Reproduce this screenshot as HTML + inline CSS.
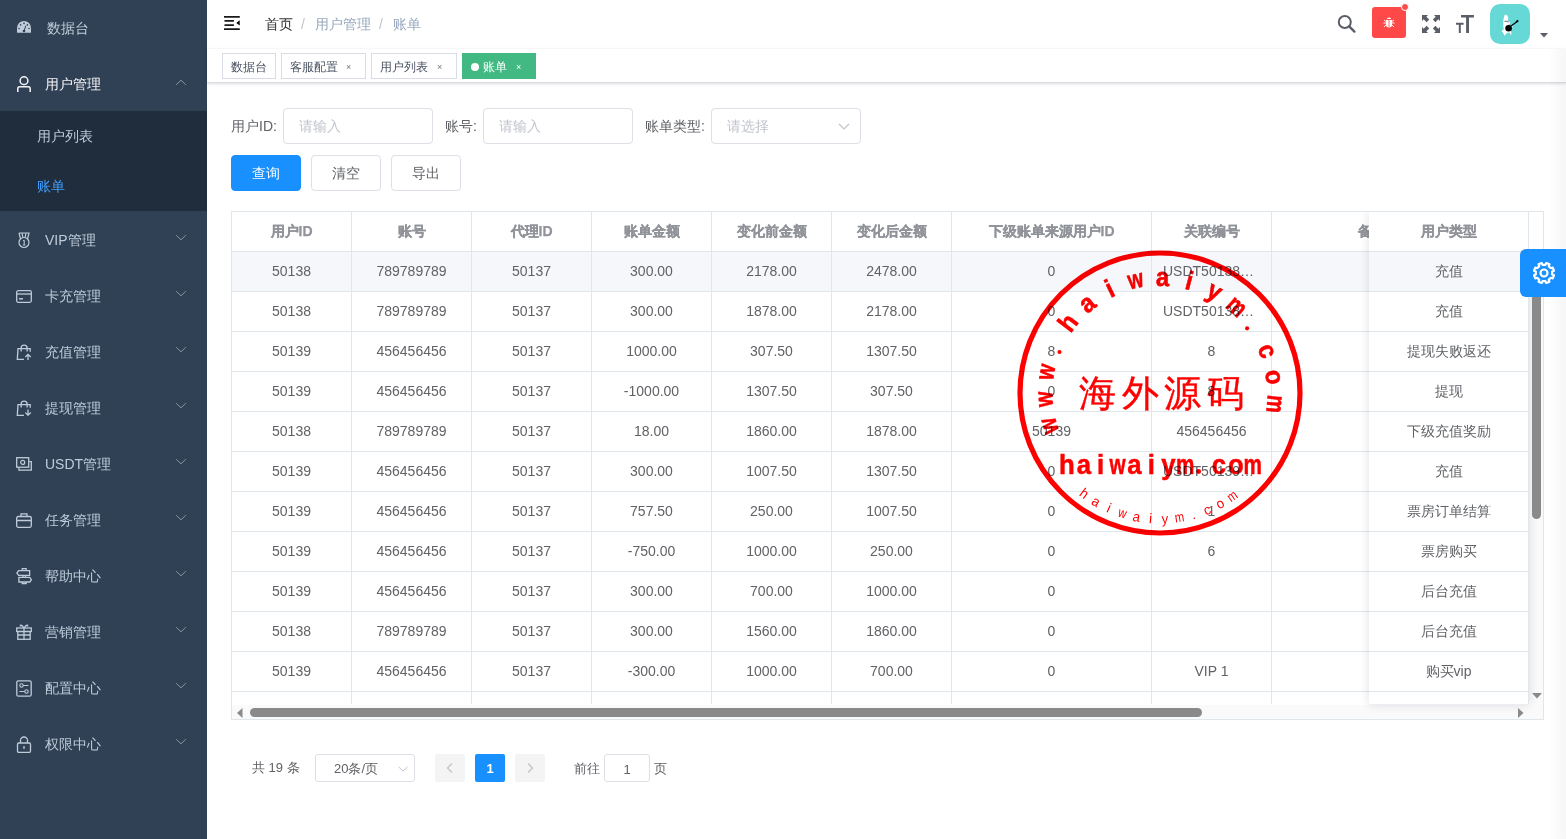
<!DOCTYPE html>
<html><head><meta charset="utf-8">
<style>
*{margin:0;padding:0;box-sizing:border-box}
html,body{width:1566px;height:839px;overflow:hidden;background:#fff;font-family:"Liberation Sans",sans-serif;}
.abs{position:absolute}
#side{position:absolute;left:0;top:0;width:207px;height:839px;background:#304156}
.mi{position:absolute;left:0;width:207px;height:56px;font-size:14px;color:#bfcbd9;line-height:56px;white-space:nowrap}
.mi .t{position:absolute;left:45px;top:1px}
.mi svg.ic{position:absolute;left:15px}
.mi svg.ar{position:absolute;left:175px;top:23px}
#sub{position:absolute;left:0;top:111px;width:207px;height:100px;background:#1f2d3d}
.si{position:absolute;left:37px;font-size:14px;line-height:50px;height:50px;color:#bfcbd9;white-space:nowrap}
#nav{position:absolute;left:207px;top:0;width:1359px;height:49px;background:#fff}
.bc{position:absolute;top:0;line-height:49px;font-size:14px;white-space:nowrap}
#tags{position:absolute;left:207px;top:49px;width:1359px;height:34px;background:#fff;border-bottom:1px solid #d8dce5;box-shadow:0 1px 3px 0 rgba(0,0,0,.12),0 0 3px 0 rgba(0,0,0,.04)}
.tag{position:absolute;top:4px;height:26px;line-height:27px;border:1px solid #d8dce5;color:#495060;font-size:12px;padding-left:8px;white-space:nowrap;background:#fff}
.tag .x{position:absolute;top:0px;font-size:9px;color:#777}
.lbl{position:absolute;font-size:14px;color:#606266;line-height:36px;top:108px;white-space:nowrap}
.inp{position:absolute;top:108px;height:36px;border:1px solid #dcdfe6;border-radius:4px;font-size:14px;color:#c0c4cc;line-height:34px;padding-left:15px;background:#fff;white-space:nowrap}
.btn{position:absolute;top:155px;height:36px;border:1px solid #dcdfe6;border-radius:4px;font-size:14px;color:#606266;line-height:34px;text-align:center;background:#fff;white-space:nowrap}
#tbl{position:absolute;left:231px;top:211px;width:1313px;height:509px;border:1px solid #dfe6ec;overflow:hidden;background:#fff}
#tb-inner{position:absolute;left:0;top:0;width:1297px;height:492px;overflow:hidden}
.th{position:absolute;top:0;height:40px;line-height:39px;text-align:center;font-size:14px;font-weight:bold;color:#909399;-webkit-text-stroke:.25px #909399;border-right:1px solid #dfe6ec;border-bottom:1px solid #dfe6ec;white-space:nowrap;overflow:hidden;background:#fff}
.tr{position:absolute;left:0;height:40px}
.tr.hov .td{background:#f5f7fa}
.td{position:absolute;top:0;height:40px;line-height:39px;text-align:center;font-size:14px;color:#606266;border-right:1px solid #dfe6ec;border-bottom:1px solid #dfe6ec;white-space:nowrap;overflow:hidden;background:#fff;padding:0 10px;text-overflow:ellipsis}
#fixed{position:absolute;left:1137px;top:0;width:160px;height:493px;background:#fff;box-shadow:0 0 10px rgba(0,0,0,.12);border-bottom:1px solid #ebeef5;overflow:hidden}
#fshadow{position:absolute;left:-8px;top:0;width:8px;height:493px;background:linear-gradient(90deg,rgba(0,0,0,0),rgba(0,0,0,.06))}
#vbar{position:absolute;left:1297px;top:40px;width:14px;height:467px;background:#fafafa}
#hbar{position:absolute;left:0;top:493px;width:1297px;height:14px;background:#fafafa}
.pg{position:absolute;top:754px;height:28px;font-size:13px;line-height:30px;white-space:nowrap}
.st1{font-family:"Liberation Sans",sans-serif;font-weight:bold;font-size:26px;fill:#f00;stroke:#f00;stroke-width:.6px;text-anchor:middle;dominant-baseline:central}
.st2{font-family:"Liberation Sans",sans-serif;font-size:14px;fill:#f00;text-anchor:middle;dominant-baseline:central}
.st3{font-family:"Liberation Serif",serif;font-size:37px;fill:#f00;stroke:#f00;stroke-width:.4px;text-anchor:middle;dominant-baseline:central;letter-spacing:5.5px}
.st4{font-family:"Liberation Sans",sans-serif;font-weight:bold;font-size:28px;fill:#f00;stroke:#f00;stroke-width:.5px;text-anchor:middle}
</style></head><body>
<div id="side">
  <div class="mi" style="top:-1px"><svg class="ic" style="top:22px;left:17px" width="14" height="12" viewBox="0 0 14 12"><path d="M0 11.7V7A7 7 0 0 1 14 7v4.7z" fill="#bfcbd9"/><g fill="#304156"><circle cx="2" cy="7.5" r=".8"/><circle cx="3.6" cy="3.9" r=".8"/><circle cx="7" cy="2.4" r=".8"/><circle cx="10.4" cy="3.9" r=".8"/><circle cx="12" cy="7.5" r=".8"/><circle cx="7" cy="10" r="1.3"/></g><path d="M7 10L8.9 4.6" stroke="#304156" stroke-width="1"/></svg><span class="t" style="left:47px">数据台</span></div>
  <div class="mi" style="top:55px;color:#f4f4f5"><svg class="ic" style="top:20px;left:17px" width="15" height="17" viewBox="0 0 15 17"><circle cx="7" cy="5.7" r="3.9" fill="none" stroke="#f4f4f5" stroke-width="1.5"/><path d="M.8 17v-3.3q0-1.9 1.9-1.9h8.6q1.9 0 1.9 1.9V17" fill="none" stroke="#f4f4f5" stroke-width="1.5"/></svg><span class="t">用户管理</span><svg class="ar" style="top:24px" width="12" height="7" viewBox="0 0 12 7"><path d="M1.2 5.8L6 1.2l4.8 4.6" fill="none" stroke="#909399" stroke-width="1"/></svg></div>
  <div id="sub">
    <div class="si" style="top:0">用户列表</div>
    <div class="si" style="top:50px;color:#409eff">账单</div>
  </div>
  <div class="mi" style="top:211px"><svg class="ic" style="top:21px;left:17px" width="14" height="17" viewBox="0 0 14 17"><path d="M2 1h10l-1.5 6M2 1l1.5 6M5 1l1 5M9 1l-1 5" fill="none" stroke="#bfcbd9" stroke-width="1.2"/><circle cx="7" cy="10.5" r="5" fill="none" stroke="#bfcbd9" stroke-width="1.2"/><path d="M6 9l1.2-1v5M5.8 13h2.6" fill="none" stroke="#bfcbd9" stroke-width="1"/></svg><span class="t">VIP管理</span><svg class="ar" width="12" height="7" viewBox="0 0 12 7"><path d="M1.2 1.2L6 5.8l4.8-4.6" fill="none" stroke="#909399" stroke-width="1"/></svg></div>
  <div class="mi" style="top:267px"><svg class="ic" style="top:23px;left:16px" width="16" height="13" viewBox="0 0 16 13"><rect x=".7" y=".7" width="14.6" height="11.6" rx="1.5" fill="none" stroke="#bfcbd9" stroke-width="1.3"/><path d="M.7 4h14.6" stroke="#bfcbd9" stroke-width="1.3"/><path d="M3 8.8h4" stroke="#bfcbd9" stroke-width="1.5"/></svg><span class="t">卡充管理</span><svg class="ar" width="12" height="7" viewBox="0 0 12 7"><path d="M1.2 1.2L6 5.8l4.8-4.6" fill="none" stroke="#909399" stroke-width="1"/></svg></div>
  <div class="mi" style="top:323px"><svg class="ic" style="top:21px;left:16px" width="16" height="16" viewBox="0 0 16 16"><path d="M8 15.3H1.3L2 4.7h12.2v3" fill="none" stroke="#bfcbd9" stroke-width="1.3"/><path d="M5.1 7.4V4.2a3 3 0 0 1 6 0v3.2" fill="none" stroke="#bfcbd9" stroke-width="1.3"/><path d="M12 16V10.6M9.4 13l2.6-2.6 2.8 2.6" fill="none" stroke="#bfcbd9" stroke-width="1.3"/></svg><span class="t">充值管理</span><svg class="ar" width="12" height="7" viewBox="0 0 12 7"><path d="M1.2 1.2L6 5.8l4.8-4.6" fill="none" stroke="#909399" stroke-width="1"/></svg></div>
  <div class="mi" style="top:379px"><svg class="ic" style="top:21px;left:16px" width="16" height="16" viewBox="0 0 16 16"><path d="M8 15.3H1.3L2 4.7h12.2v3" fill="none" stroke="#bfcbd9" stroke-width="1.3"/><path d="M5.1 7.4V4.2a3 3 0 0 1 6 0v3.2" fill="none" stroke="#bfcbd9" stroke-width="1.3"/><path d="M12 9.6V15M9.4 12.6l2.6 2.6 2.8-2.6" fill="none" stroke="#bfcbd9" stroke-width="1.3"/></svg><span class="t">提现管理</span><svg class="ar" width="12" height="7" viewBox="0 0 12 7"><path d="M1.2 1.2L6 5.8l4.8-4.6" fill="none" stroke="#909399" stroke-width="1"/></svg></div>
  <div class="mi" style="top:435px"><svg class="ic" style="top:22px;left:16px" width="16" height="15" viewBox="0 0 16 15"><rect x=".7" y=".7" width="12" height="9.5" fill="none" stroke="#bfcbd9" stroke-width="1.3"/><circle cx="6.7" cy="5.4" r="2" fill="none" stroke="#bfcbd9" stroke-width="1.2"/><path d="M2.9 10.5v2.6h12.4V4.6h-2" fill="none" stroke="#bfcbd9" stroke-width="1.3"/></svg><span class="t">USDT管理</span><svg class="ar" width="12" height="7" viewBox="0 0 12 7"><path d="M1.2 1.2L6 5.8l4.8-4.6" fill="none" stroke="#909399" stroke-width="1"/></svg></div>
  <div class="mi" style="top:491px"><svg class="ic" style="top:22px;left:16px" width="16" height="15" viewBox="0 0 16 15"><rect x=".7" y="3.5" width="14.6" height="10.8" rx="1.5" fill="none" stroke="#bfcbd9" stroke-width="1.3"/><path d="M5 3.5V.8h6v2.7M.7 7.5h14.6" fill="none" stroke="#bfcbd9" stroke-width="1.3"/></svg><span class="t">任务管理</span><svg class="ar" width="12" height="7" viewBox="0 0 12 7"><path d="M1.2 1.2L6 5.8l4.8-4.6" fill="none" stroke="#909399" stroke-width="1"/></svg></div>
  <div class="mi" style="top:547px"><svg class="ic" style="top:20px;left:16px" width="17" height="18" viewBox="0 0 17 18"><path d="M13.6 3.6H2.6L.9 6l1.7 2.4h11z" fill="none" stroke="#bfcbd9" stroke-width="1.3"/><path d="M2.9 10.4h10.9l1.6 2.3-1.6 2.3H2.9z" fill="none" stroke="#bfcbd9" stroke-width="1.3"/><path d="M6.2 3.6V1.6h4v2M6.2 15v1.7h4V15M7 8.4v2M9.4 8.4v2" fill="none" stroke="#bfcbd9" stroke-width="1.2"/></svg><span class="t">帮助中心</span><svg class="ar" width="12" height="7" viewBox="0 0 12 7"><path d="M1.2 1.2L6 5.8l4.8-4.6" fill="none" stroke="#909399" stroke-width="1"/></svg></div>
  <div class="mi" style="top:603px"><svg class="ic" style="top:20px;left:16px" width="16" height="17" viewBox="0 0 16 17"><rect x=".7" y="5" width="14.6" height="3.5" fill="none" stroke="#bfcbd9" stroke-width="1.3"/><rect x="1.8" y="8.5" width="12.4" height="7.8" fill="none" stroke="#bfcbd9" stroke-width="1.3"/><path d="M8 5v11.3M1.8 12h12.4M8 5C6 2 3.5 1 4.5 3.5M8 5c2-3 4.5-4 3.5-1.5" fill="none" stroke="#bfcbd9" stroke-width="1.3"/></svg><span class="t">营销管理</span><svg class="ar" width="12" height="7" viewBox="0 0 12 7"><path d="M1.2 1.2L6 5.8l4.8-4.6" fill="none" stroke="#909399" stroke-width="1"/></svg></div>
  <div class="mi" style="top:659px"><svg class="ic" style="top:21px;left:16px" width="16" height="17" viewBox="0 0 16 17"><rect x=".8" y=".8" width="14.4" height="15.4" rx="1.5" fill="none" stroke="#bfcbd9" stroke-width="1.3"/><circle cx="5.5" cy="5.5" r="1.7" fill="none" stroke="#bfcbd9" stroke-width="1.1"/><circle cx="10.5" cy="11.5" r="1.7" fill="none" stroke="#bfcbd9" stroke-width="1.1"/><path d="M7.2 5.5H12.5M3.5 11.5h5.3" stroke="#bfcbd9" stroke-width="1.1"/></svg><span class="t">配置中心</span><svg class="ar" width="12" height="7" viewBox="0 0 12 7"><path d="M1.2 1.2L6 5.8l4.8-4.6" fill="none" stroke="#909399" stroke-width="1"/></svg></div>
  <div class="mi" style="top:715px"><svg class="ic" style="top:21px;left:16px" width="16" height="17" viewBox="0 0 16 17"><rect x="1.5" y="7" width="13" height="9.3" rx="1.2" fill="none" stroke="#bfcbd9" stroke-width="1.3"/><path d="M4.5 7V4.5a3.5 3.5 0 0 1 7 0V7M8 10v3" fill="none" stroke="#bfcbd9" stroke-width="1.3"/></svg><span class="t">权限中心</span><svg class="ar" width="12" height="7" viewBox="0 0 12 7"><path d="M1.2 1.2L6 5.8l4.8-4.6" fill="none" stroke="#909399" stroke-width="1"/></svg></div>
</div>

<div id="nav">
  <svg class="abs" style="left:17px;top:16px" width="16" height="15" viewBox="0 0 16 15"><path d="M0 .85h15.8M.5 4.85h9.4M.5 9.1h9.4M0 13.1h15.8" stroke="#1a1a1a" stroke-width="1.7"/><path d="M15.7 4.3v5.2l-3.4-2.6z" fill="#000"/></svg>
  <div class="bc" style="left:58px;color:#303133">首页</div>
  <div class="bc" style="left:94px;color:#c0c4cc">/</div>
  <div class="bc" style="left:108px;color:#97a8be">用户管理</div>
  <div class="bc" style="left:172px;color:#c0c4cc">/</div>
  <div class="bc" style="left:186px;color:#97a8be">账单</div>
  <!-- right icons -->
  <svg class="abs" style="left:1130px;top:14px" width="20" height="20" viewBox="0 0 20 20"><circle cx="7.8" cy="8" r="6" fill="none" stroke="#5a5e66" stroke-width="2"/><path d="M12.2 12.4l5.2 5.2" stroke="#5a5e66" stroke-width="2.4" stroke-linecap="round"/></svg>
  <div class="abs" style="left:1165px;top:7px;width:34px;height:31px;background:#ff4949;border-radius:3px"></div>
  <div class="abs" style="left:1194px;top:3px;width:8px;height:8px;background:#ff4949;border:1px solid #fff;border-radius:50%"></div>
  <svg class="abs" style="left:1176px;top:16px" width="12" height="12" viewBox="0 0 12 12"><path d="M3.8 3a2.2 1.6 0 0 1 4.4 0z" fill="#fff"/><path d="M3 4h6v4.5a3 3 0 0 1-6 0z" fill="#fff"/><path d="M6 4v7" stroke="#ff4949" stroke-width=".8"/><path d="M3 5.5L1 4M9 5.5L11 4M3 7H.5M9 7h2.5M3 9l-2 2M9 9l2 2" stroke="#fff" stroke-width=".9"/></svg>
  <svg class="abs" style="left:1215px;top:15px" width="18" height="18" viewBox="0 0 18 18"><g fill="#5a5e66"><path d="M0 0h6L4.3 1.7 7.2 4.6 4.6 7.2 1.7 4.3 0 6z"/><path d="M18 0v6l-1.7-1.7-2.9 2.9-2.6-2.6 2.9-2.9L12 0z"/><path d="M0 18v-6l1.7 1.7 2.9-2.9 2.6 2.6-2.9 2.9L6 18z"/><path d="M18 18h-6l1.7-1.7-2.9-2.9 2.6-2.6 2.9 2.9L18 12z"/></g></svg>
  <svg class="abs" style="left:1249px;top:15px" width="19" height="18" viewBox="0 0 19 18"><g fill="#5a5e66"><path d="M5 0h12.9v2.4h-4.9V18h-2.9V2.4H5z"/><path d="M0 7.8h7.6v2H4.8V18H2.8V9.8H0z"/></g></svg>
  <div class="abs" style="left:1283px;top:4px;width:40px;height:40px;background:#66d8d6;border-radius:10px;overflow:hidden">
    <svg width="40" height="40" viewBox="0 0 40 40"><g transform="translate(1.2 0)"><path d="M13.5 10.5l1.2 1 1-.9.6 1.6.9 1.2-.5 1.6.4 1.7-.2 1.2 2.3.4-.4 1.4-1.5.6 1.2 2.6 2.5-1.5.7 1.2-1.8 1.6-.6 1.9.8 2.5.1 1.9-.9.1-1.1-2.3-2.1.7-1.6 1.3-.8 1.1-1.1-.2.4-1.4-1.4-.3.2-1.2-1.3-.5.3-1.3 1.5-.5.1-1.9-.4-2.5.2-2.7-.1-2.8z" fill="#fff"/><circle cx="17.4" cy="24.2" r="3.3" fill="#000"/><path d="M19.5 22.3l6.5-4.8" stroke="#000" stroke-width="1.1"/><path d="M25 18l2-1.6" stroke="#000" stroke-width="1.8"/><path d="M13.3 17.3h3.7" stroke="#555" stroke-width=".9"/><circle cx="17" cy="18.3" r=".7" fill="#f9c"/></g></svg>
  </div>
  <svg class="abs" style="left:1333px;top:33px" width="8" height="5" viewBox="0 0 8 5"><path d="M0 0h8L4 4.5z" fill="#5a5e66"/></svg>
</div>

<div id="tags">
  <div class="tag" style="left:15px;width:54px">数据台</div>
  <div class="tag" style="left:74px;width:85px">客服配置<span class="x" style="left:64px">×</span></div>
  <div class="tag" style="left:164px;width:86px">用户列表<span class="x" style="left:65px">×</span></div>
  <div class="tag" style="left:255px;width:74px;background:#42b983;border-color:#42b983;color:#fff"><span style="display:inline-block;width:8px;height:8px;border-radius:50%;background:#fff;margin-right:4px;vertical-align:0px"></span>账单<span class="x" style="left:53px;color:#fff">×</span></div>
</div>

<div class="lbl" style="left:231px">用户ID:</div>
<div class="inp" style="left:283px;width:150px">请输入</div>
<div class="lbl" style="left:445px">账号:</div>
<div class="inp" style="left:483px;width:150px">请输入</div>
<div class="lbl" style="left:645px">账单类型:</div>
<div class="inp" style="left:711px;width:150px">请选择<svg class="abs" style="left:126px;top:14px" width="12" height="7" viewBox="0 0 12 7"><path d="M1 1l5 5 5-5" fill="none" stroke="#c0c4cc" stroke-width="1.2"/></svg></div>

<div class="btn" style="left:231px;width:70px;background:#1890ff;border-color:#1890ff;color:#fff">查询</div>
<div class="btn" style="left:311px;width:70px">清空</div>
<div class="btn" style="left:391px;width:70px">导出</div>

<div id="tbl">
  <div id="tb-inner">
<div class="th" style="left:0px;width:120px">用户ID</div>
<div class="th" style="left:120px;width:120px">账号</div>
<div class="th" style="left:240px;width:120px">代理ID</div>
<div class="th" style="left:360px;width:120px">账单金额</div>
<div class="th" style="left:480px;width:120px">变化前金额</div>
<div class="th" style="left:600px;width:120px">变化后金额</div>
<div class="th" style="left:720px;width:200px">下级账单来源用户ID</div>
<div class="th" style="left:920px;width:120px">关联编号</div>
<div class="th" style="left:1040px;width:200px">备注</div>
<div class="tr hov" style="top:40px;width:1240px">
<div class="td" style="left:0px;width:120px">50138</div>
<div class="td" style="left:120px;width:120px">789789789</div>
<div class="td" style="left:240px;width:120px">50137</div>
<div class="td" style="left:360px;width:120px">300.00</div>
<div class="td" style="left:480px;width:120px">2178.00</div>
<div class="td" style="left:600px;width:120px">2478.00</div>
<div class="td" style="left:720px;width:200px">0</div>
<div class="td" style="left:920px;width:120px;text-align:left;padding-left:11px">USDT50138…</div>
<div class="td" style="left:1040px;width:200px"></div>
</div>
<div class="tr" style="top:80px;width:1240px">
<div class="td" style="left:0px;width:120px">50138</div>
<div class="td" style="left:120px;width:120px">789789789</div>
<div class="td" style="left:240px;width:120px">50137</div>
<div class="td" style="left:360px;width:120px">300.00</div>
<div class="td" style="left:480px;width:120px">1878.00</div>
<div class="td" style="left:600px;width:120px">2178.00</div>
<div class="td" style="left:720px;width:200px">0</div>
<div class="td" style="left:920px;width:120px;text-align:left;padding-left:11px">USDT50138…</div>
<div class="td" style="left:1040px;width:200px"></div>
</div>
<div class="tr" style="top:120px;width:1240px">
<div class="td" style="left:0px;width:120px">50139</div>
<div class="td" style="left:120px;width:120px">456456456</div>
<div class="td" style="left:240px;width:120px">50137</div>
<div class="td" style="left:360px;width:120px">1000.00</div>
<div class="td" style="left:480px;width:120px">307.50</div>
<div class="td" style="left:600px;width:120px">1307.50</div>
<div class="td" style="left:720px;width:200px">8</div>
<div class="td" style="left:920px;width:120px">8</div>
<div class="td" style="left:1040px;width:200px"></div>
</div>
<div class="tr" style="top:160px;width:1240px">
<div class="td" style="left:0px;width:120px">50139</div>
<div class="td" style="left:120px;width:120px">456456456</div>
<div class="td" style="left:240px;width:120px">50137</div>
<div class="td" style="left:360px;width:120px">-1000.00</div>
<div class="td" style="left:480px;width:120px">1307.50</div>
<div class="td" style="left:600px;width:120px">307.50</div>
<div class="td" style="left:720px;width:200px">0</div>
<div class="td" style="left:920px;width:120px">8</div>
<div class="td" style="left:1040px;width:200px"></div>
</div>
<div class="tr" style="top:200px;width:1240px">
<div class="td" style="left:0px;width:120px">50138</div>
<div class="td" style="left:120px;width:120px">789789789</div>
<div class="td" style="left:240px;width:120px">50137</div>
<div class="td" style="left:360px;width:120px">18.00</div>
<div class="td" style="left:480px;width:120px">1860.00</div>
<div class="td" style="left:600px;width:120px">1878.00</div>
<div class="td" style="left:720px;width:200px">50139</div>
<div class="td" style="left:920px;width:120px">456456456</div>
<div class="td" style="left:1040px;width:200px"></div>
</div>
<div class="tr" style="top:240px;width:1240px">
<div class="td" style="left:0px;width:120px">50139</div>
<div class="td" style="left:120px;width:120px">456456456</div>
<div class="td" style="left:240px;width:120px">50137</div>
<div class="td" style="left:360px;width:120px">300.00</div>
<div class="td" style="left:480px;width:120px">1007.50</div>
<div class="td" style="left:600px;width:120px">1307.50</div>
<div class="td" style="left:720px;width:200px">0</div>
<div class="td" style="left:920px;width:120px;text-align:left;padding-left:11px">USDT50139…</div>
<div class="td" style="left:1040px;width:200px"></div>
</div>
<div class="tr" style="top:280px;width:1240px">
<div class="td" style="left:0px;width:120px">50139</div>
<div class="td" style="left:120px;width:120px">456456456</div>
<div class="td" style="left:240px;width:120px">50137</div>
<div class="td" style="left:360px;width:120px">757.50</div>
<div class="td" style="left:480px;width:120px">250.00</div>
<div class="td" style="left:600px;width:120px">1007.50</div>
<div class="td" style="left:720px;width:200px">0</div>
<div class="td" style="left:920px;width:120px">1</div>
<div class="td" style="left:1040px;width:200px"></div>
</div>
<div class="tr" style="top:320px;width:1240px">
<div class="td" style="left:0px;width:120px">50139</div>
<div class="td" style="left:120px;width:120px">456456456</div>
<div class="td" style="left:240px;width:120px">50137</div>
<div class="td" style="left:360px;width:120px">-750.00</div>
<div class="td" style="left:480px;width:120px">1000.00</div>
<div class="td" style="left:600px;width:120px">250.00</div>
<div class="td" style="left:720px;width:200px">0</div>
<div class="td" style="left:920px;width:120px">6</div>
<div class="td" style="left:1040px;width:200px"></div>
</div>
<div class="tr" style="top:360px;width:1240px">
<div class="td" style="left:0px;width:120px">50139</div>
<div class="td" style="left:120px;width:120px">456456456</div>
<div class="td" style="left:240px;width:120px">50137</div>
<div class="td" style="left:360px;width:120px">300.00</div>
<div class="td" style="left:480px;width:120px">700.00</div>
<div class="td" style="left:600px;width:120px">1000.00</div>
<div class="td" style="left:720px;width:200px">0</div>
<div class="td" style="left:920px;width:120px"></div>
<div class="td" style="left:1040px;width:200px"></div>
</div>
<div class="tr" style="top:400px;width:1240px">
<div class="td" style="left:0px;width:120px">50138</div>
<div class="td" style="left:120px;width:120px">789789789</div>
<div class="td" style="left:240px;width:120px">50137</div>
<div class="td" style="left:360px;width:120px">300.00</div>
<div class="td" style="left:480px;width:120px">1560.00</div>
<div class="td" style="left:600px;width:120px">1860.00</div>
<div class="td" style="left:720px;width:200px">0</div>
<div class="td" style="left:920px;width:120px"></div>
<div class="td" style="left:1040px;width:200px"></div>
</div>
<div class="tr" style="top:440px;width:1240px">
<div class="td" style="left:0px;width:120px">50139</div>
<div class="td" style="left:120px;width:120px">456456456</div>
<div class="td" style="left:240px;width:120px">50137</div>
<div class="td" style="left:360px;width:120px">-300.00</div>
<div class="td" style="left:480px;width:120px">1000.00</div>
<div class="td" style="left:600px;width:120px">700.00</div>
<div class="td" style="left:720px;width:200px">0</div>
<div class="td" style="left:920px;width:120px">VIP 1</div>
<div class="td" style="left:1040px;width:200px"></div>
</div>
<div class="tr" style="top:480px;width:1240px">
<div class="td" style="left:0px;width:120px"></div>
<div class="td" style="left:120px;width:120px"></div>
<div class="td" style="left:240px;width:120px"></div>
<div class="td" style="left:360px;width:120px"></div>
<div class="td" style="left:480px;width:120px"></div>
<div class="td" style="left:600px;width:120px"></div>
<div class="td" style="left:720px;width:200px"></div>
<div class="td" style="left:920px;width:120px"></div>
<div class="td" style="left:1040px;width:200px"></div>
</div>
  </div>
  <div id="vbar"></div>
  <div id="hbar"></div>
  <div id="fixed">
<div class="th" style="left:0;width:160px">用户类型</div>
<div class="tr hov" style="top:40px;width:160px"><div class="td" style="left:0;width:160px">充值</div></div>
<div class="tr" style="top:80px;width:160px"><div class="td" style="left:0;width:160px">充值</div></div>
<div class="tr" style="top:120px;width:160px"><div class="td" style="left:0;width:160px">提现失败返还</div></div>
<div class="tr" style="top:160px;width:160px"><div class="td" style="left:0;width:160px">提现</div></div>
<div class="tr" style="top:200px;width:160px"><div class="td" style="left:0;width:160px">下级充值奖励</div></div>
<div class="tr" style="top:240px;width:160px"><div class="td" style="left:0;width:160px">充值</div></div>
<div class="tr" style="top:280px;width:160px"><div class="td" style="left:0;width:160px">票房订单结算</div></div>
<div class="tr" style="top:320px;width:160px"><div class="td" style="left:0;width:160px">票房购买</div></div>
<div class="tr" style="top:360px;width:160px"><div class="td" style="left:0;width:160px">后台充值</div></div>
<div class="tr" style="top:400px;width:160px"><div class="td" style="left:0;width:160px">后台充值</div></div>
<div class="tr" style="top:440px;width:160px"><div class="td" style="left:0;width:160px">购买vip</div></div>
<div class="tr" style="top:480px;width:160px"><div class="td" style="left:0;width:160px"></div></div>
  </div>
  <div class="abs" style="left:1297px;top:0;width:14px;height:40px;background:#fff;border-bottom:1px solid #dfe6ec"></div>
  <div class="abs" style="left:1300px;top:56px;width:9px;height:251px;background:#8a8a8a;border-radius:5px"></div>
  <svg class="abs" style="left:1300px;top:481px" width="10" height="6" viewBox="0 0 10 6"><path d="M0 0h10L5 5.5z" fill="#8a8a8a"/></svg>
  <svg class="abs" style="left:5px;top:496px" width="6" height="10" viewBox="0 0 6 10"><path d="M5.5 0v10L0 5z" fill="#8a8a8a"/></svg>
  <div class="abs" style="left:18px;top:496px;width:952px;height:9px;background:#8a8a8a;border-radius:5px"></div>
  <svg class="abs" style="left:1286px;top:496px" width="6" height="10" viewBox="0 0 6 10"><path d="M0 0v10L5.5 5z" fill="#8a8a8a"/></svg>
</div>

<!-- pagination -->
<div class="pg" style="left:252px;color:#606266;line-height:28px">共 19 条</div>
<div class="pg" style="left:315px;width:100px;border:1px solid #dcdfe6;border-radius:3px;color:#606266;padding-left:18px;line-height:27px">20条/页<svg class="abs" style="left:82px;top:11px" width="10" height="6" viewBox="0 0 10 6"><path d="M.5.8L5 5l4.5-4.2" fill="none" stroke="#c0c4cc" stroke-width="1"/></svg></div>
<div class="pg" style="left:435px;width:30px;background:#f4f4f5;border-radius:2px"><svg class="abs" style="left:11px;top:9px" width="7" height="10" viewBox="0 0 7 10"><path d="M6 .5L1.5 5 6 9.5" fill="none" stroke="#c0c4cc" stroke-width="1.4"/></svg></div>
<div class="pg" style="left:475px;width:30px;background:#1890ff;border-radius:2px;color:#fff;font-weight:bold;text-align:center">1</div>
<div class="pg" style="left:515px;width:30px;background:#f4f4f5;border-radius:2px"><svg class="abs" style="left:12px;top:9px" width="7" height="10" viewBox="0 0 7 10"><path d="M1 .5L5.5 5 1 9.5" fill="none" stroke="#c0c4cc" stroke-width="1.4"/></svg></div>
<div class="pg" style="left:574px;color:#606266">前往</div>
<div class="pg" style="left:604px;width:46px;border:1px solid #dcdfe6;border-radius:3px;color:#606266;text-align:center">1</div>
<div class="pg" style="left:654px;color:#606266">页</div>

<div class="abs" style="left:1548px;top:49px;width:18px;height:790px;background:linear-gradient(90deg,rgba(0,0,0,0),rgba(0,0,0,.035))"></div>
<!-- settings button -->
<div class="abs" style="left:1520px;top:249px;width:48px;height:48px;background:#1890ff;border-radius:6px 0 0 6px">
  <svg class="abs" style="left:13px;top:13px" width="22" height="22" viewBox="0 0 22 22"><path d="M19.18 12.43 L21.03 13.33 L19.74 16.45 L17.79 15.77 L15.77 17.79 L16.45 19.74 L13.33 21.03 L12.43 19.18 L9.57 19.18 L8.67 21.03 L5.55 19.74 L6.23 17.79 L4.21 15.77 L2.26 16.45 L0.97 13.33 L2.82 12.43 L2.82 9.57 L0.97 8.67 L2.26 5.55 L4.21 6.23 L6.23 4.21 L5.55 2.26 L8.67 0.97 L9.57 2.82 L12.43 2.82 L13.33 0.97 L16.45 2.26 L15.77 4.21 L17.79 6.23 L19.74 5.55 L21.03 8.67 L19.18 9.57Z" fill="none" stroke="#fff" stroke-width="2.2" stroke-linejoin="round"/><circle cx="11" cy="11" r="3.5" fill="none" stroke="#fff" stroke-width="2.2"/></svg>
</div>

<!-- stamp -->
<svg class="abs" style="left:1017px;top:250px;overflow:visible;mix-blend-mode:multiply" width="286" height="286" viewBox="0 0 286 286">
<circle cx="143" cy="143" r="140" fill="none" stroke="#f00" stroke-width="5.2"/>
<text transform="translate(31.3 176.1) rotate(-106.5) scale(0.76 1)" class="st1">w</text>
<text transform="translate(26.7 149.2) rotate(-93.0) scale(0.76 1)" class="st1">w</text>
<text transform="translate(28.4 121.9) rotate(-79.6) scale(0.76 1)" class="st1">w</text>
<circle cx="42.5" cy="102.0" r="2.1" fill="#f00"/>
<text transform="translate(50.4 72.3) rotate(-52.6) scale(0.92 1)" class="st1">h</text>
<text transform="translate(69.4 52.7) rotate(-39.2) scale(0.92 1)" class="st1">a</text>
<text transform="translate(92.5 38.0) rotate(-25.7) scale(0.92 1)" class="st1">i</text>
<text transform="translate(118.3 29.1) rotate(-12.2) scale(0.76 1)" class="st1">w</text>
<text transform="translate(145.5 26.5) rotate(1.2) scale(0.92 1)" class="st1">a</text>
<text transform="translate(172.6 30.3) rotate(14.7) scale(0.92 1)" class="st1">i</text>
<text transform="translate(198.0 40.3) rotate(28.2) scale(0.92 1)" class="st1">y</text>
<text transform="translate(220.4 55.9) rotate(41.6) scale(0.76 1)" class="st1">m</text>
<circle cx="230.1" cy="78.3" r="2.1" fill="#f00"/>
<text transform="translate(251.4 100.4) rotate(68.6) scale(0.92 1)" class="st1">c</text>
<text transform="translate(258.4 126.9) rotate(82.0) scale(0.92 1)" class="st1">o</text>
<text transform="translate(259.0 154.2) rotate(95.5) scale(0.76 1)" class="st1">m</text>
<text transform="translate(67.2 243.6) rotate(37.0) scale(0.95 1)" class="st2">h</text>
<text transform="translate(79.1 251.6) rotate(30.5) scale(0.95 1)" class="st2">a</text>
<text transform="translate(91.9 258.2) rotate(23.9) scale(0.95 1)" class="st2">i</text>
<text transform="translate(105.4 263.3) rotate(17.4) scale(0.8 1)" class="st2">w</text>
<text transform="translate(119.4 266.8) rotate(10.8) scale(0.95 1)" class="st2">a</text>
<text transform="translate(133.6 268.6) rotate(4.3) scale(0.95 1)" class="st2">i</text>
<text transform="translate(148.0 268.9) rotate(-2.3) scale(0.95 1)" class="st2">y</text>
<text transform="translate(162.3 267.5) rotate(-8.8) scale(0.8 1)" class="st2">m</text>
<text transform="translate(176.4 264.5) rotate(-15.4) scale(0.95 1)" class="st2">.</text>
<text transform="translate(190.0 259.9) rotate(-21.9) scale(0.95 1)" class="st2">c</text>
<text transform="translate(203.0 253.8) rotate(-28.5) scale(0.95 1)" class="st2">o</text>
<text transform="translate(215.3 246.2) rotate(-35.0) scale(0.8 1)" class="st2">m</text>
<text x="147" y="143.5" class="st3">海外源码</text>
<text transform="translate(49.9 223.7) scale(0.92 1)" class="st4">h</text>
<text transform="translate(66.8 223.7) scale(0.92 1)" class="st4">a</text>
<text transform="translate(83.7 223.7) scale(0.92 1)" class="st4">i</text>
<text transform="translate(100.6 223.7) scale(0.74 1)" class="st4">w</text>
<text transform="translate(117.5 223.7) scale(0.92 1)" class="st4">a</text>
<text transform="translate(134.4 223.7) scale(0.92 1)" class="st4">i</text>
<text transform="translate(151.3 223.7) scale(0.92 1)" class="st4">y</text>
<text transform="translate(168.2 223.7) scale(0.74 1)" class="st4">m</text>
<circle cx="181.7" cy="221.5" r="2.4" fill="#f00"/>
<text transform="translate(202.0 223.7) scale(0.92 1)" class="st4">c</text>
<text transform="translate(218.9 223.7) scale(0.92 1)" class="st4">o</text>
<text transform="translate(235.8 223.7) scale(0.74 1)" class="st4">m</text>
</svg>

</body></html>
